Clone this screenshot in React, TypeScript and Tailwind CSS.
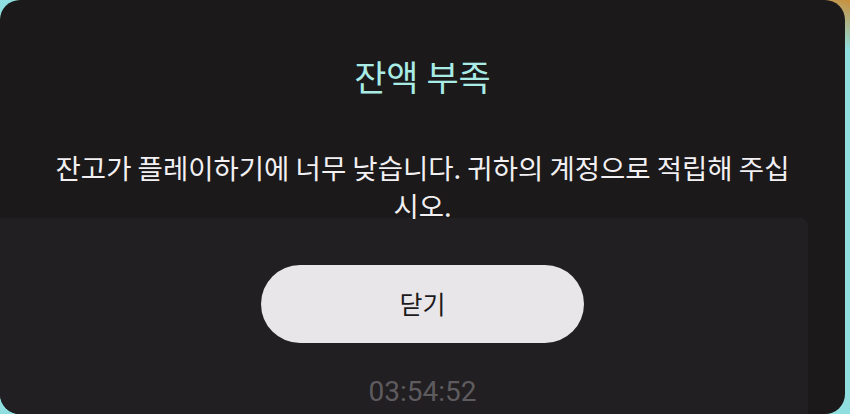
export default function App() {
  return (
    <div className="w-[850px] h-[414px] overflow-hidden bg-[linear-gradient(200deg,#c98f3a_0%,#8fdfe0_7%,#8fdfe0_100%)]">
      <div className="w-[845px] h-[414px] rounded-[20px] overflow-hidden bg-[#1b191a] grid font-['Noto_Sans_CJK_KR','Noto_Sans',sans-serif]">
        {/* faint content behind the dialog */}
        <div className="col-start-1 row-start-1 flex flex-col">
          <div className="h-[218px]" />
          <div className="flex-1 w-[808px] rounded-tr-[8px] bg-[#221f22]" />
        </div>

        <div className="col-start-1 row-start-1 flex flex-col items-center pt-[53px] px-[40px]">
          <h2 className="text-[35px] leading-[46px] font-normal text-[#a9ece6]">잔액 부족</h2>
          <p className="mt-[49px] max-w-[745px] text-center text-[27.5px] leading-[38px] text-[#f2f0f2]">
            잔고가 플레이하기에 너무 낮습니다. 귀하의 계정으로 적립해 주십시오.
          </p>
          <button className="mt-[41px] w-[323px] h-[78px] rounded-full bg-[#e9e6ea] text-[25px] text-[#1c1a1c]">
            닫기
          </button>
          <div className="mt-[31px] text-[28px] leading-[36px] text-[#5e5b5f] font-['Roboto',sans-serif]">
            03:54:52
          </div>
        </div>
      </div>
    </div>
  )
}
